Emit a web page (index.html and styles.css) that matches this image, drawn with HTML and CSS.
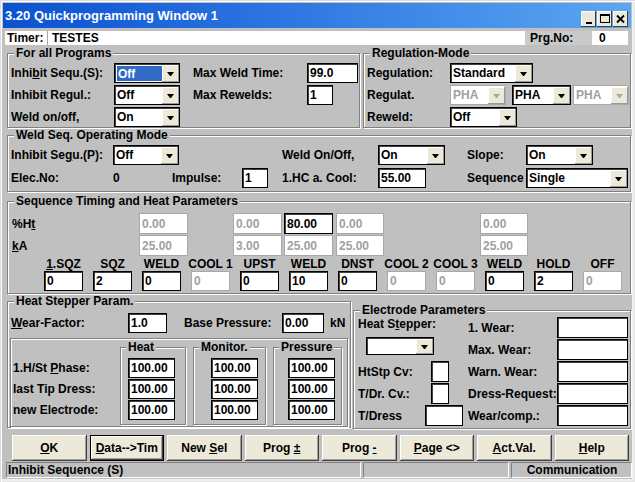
FILE: index.html
```html
<!DOCTYPE html>
<html>
<head>
<meta charset="utf-8">
<title>3.20 Quickprogramming Window 1</title>
<link rel="stylesheet" href="styles.css">
</head>
<body>
<div class="window">
  <div class="titlebar">
    <span class="title">3.20 Quickprogramming Window 1</span>
    <div class="wbtns">
      <span class="wb"><svg width="15" height="16" viewBox="0 0 15 16"><rect x="5" y="11" width="6" height="2" fill="#000"/></svg></span>
      <span class="wb"><svg width="15" height="16" viewBox="0 0 15 16"><rect x="3.5" y="3.5" width="9" height="8" fill="none" stroke="#000"/><rect x="3" y="3" width="10" height="2" fill="#000"/></svg></span>
      <span class="wb"><svg width="15" height="16" viewBox="0 0 15 16"><path d="M4 4.5l7 7M11 4.5l-7 7" stroke="#000" stroke-width="1.8"/></svg></span>
    </div>
  </div>

  <div class="timerbar">
    <div class="timer"><span class="tl">Timer:</span><span class="tv">TESTES</span></div>
    <div class="prg">Prg.No:</div>
    <div class="prgv">0</div>
  </div>

  <div class="row1">
    <div class="group g-all">
      <span class="cap">For all Programs</span>
      <div class="grid-all">
        <span class="lb"><span>Inhi<u>b</u>it Sequ.(S):</span></span>
        <div class="cmb w66"><span class="cv"><span class="hl">Off</span></span><i class="dd"></i></div>
        <span></span>
        <span class="lb">Max Weld Time:</span>
        <div class="in w51">99.0</div>
        <span class="lb">Inhibit Regul.:</span>
        <div class="cmb w66"><span class="cv">Off</span><i class="dd"></i></div>
        <span></span>
        <span class="lb">Max Rewelds:</span>
        <div class="in w26">1</div>
        <span class="lb">Weld on/off,</span>
        <div class="cmb w66"><span class="cv">On</span><i class="dd"></i></div>
      </div>
    </div>
    <div class="group g-reg">
      <span class="cap">Regulation-Mode</span>
      <div class="grid-reg">
        <span class="lb">Regulation:</span>
        <div class="cmb w83"><span class="cv">Standard</span><i class="dd"></i></div>
        <span class="lb">Regulat.</span>
        <div class="trio">
          <div class="cmb dis w56"><span class="cv">PHA</span><i class="dd"></i></div>
          <div class="cmb w59 ml6"><span class="cv">PHA</span><i class="dd"></i></div>
          <div class="cmb dis w56 ml2"><span class="cv">PHA</span><i class="dd"></i></div>
        </div>
        <span class="lb">Reweld:</span>
        <div class="cmb w67"><span class="cv">Off</span><i class="dd"></i></div>
      </div>
    </div>
  </div>

  <div class="group g-weld">
    <span class="cap">Weld Seq. Operating Mode</span>
    <div class="grid-weld">
      <span class="lb r1 c1"><span>Inhibit Se<u>g</u>u.(P):</span></span>
      <div class="cmb w66 r1 c2"><span class="cv">Off</span><i class="dd"></i></div>
      <span class="lb r1 c5">Weld On/Off,</span>
      <div class="cmb w67 r1 c6"><span class="cv">On</span><i class="dd"></i></div>
      <span class="lb r1 c8">Slope:</span>
      <div class="cmb w67 r1 c9"><span class="cv">On</span><i class="dd"></i></div>

      <span class="lb r2 c1">Elec.No:</span>
      <span class="lb r2 c2">0</span>
      <span class="lb r2 c3">Impulse:</span>
      <div class="in w26 r2 c4">1</div>
      <span class="lb r2 c5">1.HC a. Cool:</span>
      <div class="in w48 r2 c6">55.00</div>
      <span class="lb r2 c8">Sequence</span>
      <div class="cmb w102 r2 c9"><span class="cv">Single</span><i class="dd"></i></div>
    </div>
  </div>

  <div class="group g-seq">
    <span class="cap">Sequence Timing and Heat Parameters</span>
    <div class="ht-grid">
      <span class="lb r1 c1"><span>%H<u>t</u></span></span>
      <div class="in dis r1 c2">0.00</div>
      <div class="in dis r1 c4">0.00</div>
      <div class="in r1 c6">80.00</div>
      <div class="in dis r1 c8">0.00</div>
      <div class="in dis r1 c10">0.00</div>
      <span class="lb r2 c1"><span><u>k</u>A</span></span>
      <div class="in dis r2 c2">25.00</div>
      <div class="in dis r2 c4">3.00</div>
      <div class="in dis r2 c6">25.00</div>
      <div class="in dis r2 c8">25.00</div>
      <div class="in dis r2 c10">25.00</div>
    </div>
    <div class="ph-grid">
      <span class="ph"><span><u>1</u>.SQZ</span></span>
      <span class="ph">SQZ</span>
      <span class="ph">WELD</span>
      <span class="ph">COOL 1</span>
      <span class="ph">UPST</span>
      <span class="ph">WELD</span>
      <span class="ph">DNST</span>
      <span class="ph">COOL 2</span>
      <span class="ph">COOL 3</span>
      <span class="ph">WELD</span>
      <span class="ph">HOLD</span>
      <span class="ph">OFF</span>
      <div class="in">0</div>
      <div class="in">2</div>
      <div class="in">0</div>
      <div class="in dis">0</div>
      <div class="in">0</div>
      <div class="in">10</div>
      <div class="in">0</div>
      <div class="in dis">0</div>
      <div class="in dis">0</div>
      <div class="in">0</div>
      <div class="in">2</div>
      <div class="in dis">0</div>
    </div>
  </div>

  <div class="row3">
    <div class="group g-heat">
      <span class="cap">Heat Stepper Param.</span>
      <div class="wf-row">
        <span class="lb wfl"><span><u>W</u>ear-Factor:</span></span>
        <div class="in w39">1.0</div>
        <span class="lb bpl">Base Pressure:</span>
        <div class="in w42">0.00</div>
        <span class="lb kn">kN</span>
      </div>
      <div class="panel">
        <div class="plabels">
          <span class="lb"><span>1.H/St <u>P</u>hase:</span></span>
          <span class="lb">last Tip Dress:</span>
          <span class="lb">new Electrode:</span>
        </div>
        <div class="group sg sg-heat">
          <span class="cap">Heat</span>
          <div class="sgcol">
            <div class="in w47">100.00</div>
            <div class="in w47">100.00</div>
            <div class="in w47">100.00</div>
          </div>
        </div>
        <div class="group sg sg-mon">
          <span class="cap">Monitor.</span>
          <div class="sgcol">
            <div class="in w47">100.00</div>
            <div class="in w47">100.00</div>
            <div class="in w47">100.00</div>
          </div>
        </div>
        <div class="group sg sg-pre">
          <span class="cap">Pressure</span>
          <div class="sgcol">
            <div class="in w47">100.00</div>
            <div class="in w47">100.00</div>
            <div class="in w47">100.00</div>
          </div>
        </div>
      </div>
    </div>

    <div class="group g-elec">
      <span class="cap">Electrode Parameters</span>
      <div class="ecol-l">
        <span class="lb hsl"><span>Heat S<u>t</u>epper:</span></span>
        <div class="cmb w68 h18 hsc"><span class="cv"></span><i class="dd"></i></div>
        <div class="erow first"><span class="lb">HtStp Cv:</span><div class="in w18 h21"></div></div>
        <div class="erow"><span class="lb">T/Dr. Cv.:</span><div class="in w18 h21"></div></div>
        <div class="erow td"><span class="lb">T/Dress</span><div class="in w38 h21"></div></div>
      </div>
      <div class="ecol-r">
        <span class="lb">1. Wear:</span><div class="in h21"></div>
        <span class="lb">Max. Wear:</span><div class="in h21"></div>
        <span class="lb">Warn. Wear:</span><div class="in h21"></div>
        <span class="lb">Dress-Request:</span><div class="in h21"></div>
        <span class="lb">Wear/comp.:</span><div class="in h21"></div>
      </div>
    </div>
  </div>

  <div class="buttons">
    <div class="btn"><span><u>O</u>K</span></div>
    <div class="btn def"><span><u>D</u>ata--&gt;Tim</span></div>
    <div class="btn"><span>New <u>S</u>el</span></div>
    <div class="btn"><span>Prog <u>±</u></span></div>
    <div class="btn"><span>Prog <u>-</u></span></div>
    <div class="btn"><span><u>P</u>age &lt;&gt;</span></div>
    <div class="btn"><span><u>A</u>ct.Val.</span></div>
    <div class="btn"><span><u>H</u>elp</span></div>
  </div>

  <div class="status">
    <div class="sp">Inhibit Sequence (S)</div>
    <div class="sp"></div>
    <div class="sp c">Communication</div>
  </div>
</div>
</body>
</html>
```

FILE: styles.css
```css
* { box-sizing: border-box; }
html, body { margin: 0; padding: 0; }
body {
  background: #e4e4e4;
  font: bold 12px "Liberation Sans", Arial, sans-serif;
  color: #000;
}
u { text-decoration: underline; text-underline-offset: 1px; }

.window {
  width: 635px;
  height: 482px;
  padding: 3px 4px 0 3px;
  background: #c0c0c0;
  box-shadow: inset 1px 1px #dcdcdc, inset 2px 2px #fff, inset -1px -1px #e6e6e6, inset -3px -3px #f0f0f0;
  overflow: hidden;
}

/* title bar */
.titlebar {
  height: 25px;
  display: flex;
  align-items: flex-start;
  background: linear-gradient(to right, #0a52d0 0%, #2a72e0 40%, #5ca6f2 100%);
}
.title {
  color: #fff;
  font-size: 13px;
  line-height: 26px;
  padding-left: 2px;
}
.wbtns {
  margin: 8px 3px 0 auto;
  display: flex;
  gap: 1px;
}
.wb {
  width: 15px;
  height: 16px;
  background: #ece9d8;
  box-shadow: inset -1px -1px #404040, inset 1px 1px #fff;
  display: block;
}
.wb svg { display: block; }

/* timer row */
.timerbar {
  margin-top: 3px;
  height: 14px;
  display: flex;
  line-height: 14px;
}
.timer {
  margin-left: 2px;
  width: 520px;
  background: #fff;
  display: flex;
}
.tl {
  width: 43px;
  padding-left: 2px;
  border-right: 1px solid #a8a8a8;
}
.tv { padding-left: 4px; }
.prg {
  width: 67px;
  padding-left: 5px;
  background: #cacaca;
}
.prgv {
  width: 36px;
  padding-left: 7px;
  background: #fff;
}

/* group boxes */
.group {
  position: relative;
  border: 1px solid #808080;
  box-shadow: inset 1px 1px #fff, 1px 1px #fff;
}
.cap {
  position: absolute;
  top: -7px;
  left: 6px;
  padding: 0 2px;
  background: #c0c0c0;
  line-height: 13px;
  white-space: nowrap;
}
.sg .cap { left: 5px; }

.lb {
  display: flex;
  align-items: center;
  white-space: nowrap;
}

/* combo */
.cmb {
  display: flex;
  height: 20px;
  background: #fff;
  border: 1px solid #000;
  box-shadow: inset 1px 1px #404040;
}
.cv {
  flex: 1;
  display: flex;
  align-items: center;
  padding-left: 2px;
  overflow: hidden;
  white-space: nowrap;
}
.hl {
  align-self: stretch;
  flex: 1;
  margin: 2px 0 1px;
  display: flex;
  align-items: center;
  padding-left: 1px;
  background: #316ac5;
  color: #fff;
}
.dd {
  width: 17px;
  margin: 1px 0 0 0;
  background: #ece9d8;
  box-shadow: inset -1px -1px #9a9a9a, inset 1px 1px #fff;
  display: flex;
  align-items: center;
  justify-content: center;
}
.dd::after {
  content: "";
  width: 1px;
  height: 0;
  border-left: 3px solid transparent;
  border-right: 3px solid transparent;
  border-top: 4px solid #000;
}
.cmb.dis {
  border-color: #a8a8a8;
  box-shadow: none;
  color: #a0a0a0;
}
.cmb.dis .dd::after { border-top-color: #a8a8a8; }

/* edit */
.in {
  height: 20px;
  background: #fff;
  border: 1px solid #000;
  box-shadow: inset 1px 1px #404040;
  padding-left: 2px;
  display: flex;
  align-items: center;
  white-space: nowrap;
}
.in.dis {
  border-color: #a8a8a8;
  box-shadow: none;
  color: #a0a0a0;
}

.w18 { width: 18px; }
.w26 { width: 26px; }
.w38 { width: 38px; }
.w39 { width: 39px; }
.w42 { width: 42px; }
.w47 { width: 47px; }
.w48 { width: 48px; }
.w51 { width: 51px; }
.w56 { width: 56px; }
.w59 { width: 59px; }
.w66 { width: 66px; }
.w67 { width: 67px; }
.w68 { width: 68px; }
.w83 { width: 83px; }
.w102 { width: 102px; }
.h18 { height: 18px; }
.h21 { height: 21px; }
.ml2 { margin-left: 2px; }
.ml6 { margin-left: 6px; }

.r1 { grid-row: 1; }
.r2 { grid-row: 2; }
.c1 { grid-column: 1; }
.c2 { grid-column: 2; }
.c3 { grid-column: 3; }
.c4 { grid-column: 4; }
.c5 { grid-column: 5; }
.c6 { grid-column: 6; }
.c8 { grid-column: 8; }
.c9 { grid-column: 9; }
.c10 { grid-column: 10; }

/* row 1 */
.row1 {
  display: flex;
  margin-top: 8px;
  height: 75px;
}
.g-all {
  width: 353px;
  height: 75px;
  margin-left: 4px;
  padding: 9px 0 0 3px;
}
.grid-all {
  display: grid;
  grid-template-columns: 103px 66px 13px 114px 1fr;
  grid-auto-rows: 20px;
  row-gap: 2px;
}
.g-reg {
  width: 268px;
  height: 75px;
  margin-left: 3px;
  padding: 9px 0 0 3px;
}
.grid-reg {
  display: grid;
  grid-template-columns: 83px 1fr;
  grid-auto-rows: 20px;
  row-gap: 2px;
  justify-items: start;
}
.trio { display: flex; }

/* weld seq */
.g-weld {
  width: 624px;
  height: 57px;
  margin: 7px 0 0 4px;
  padding: 9px 0 0 3px;
}
.grid-weld {
  display: grid;
  grid-template-columns: 102px 59px 70px 40px 96px 67px 22px 59px 101px;
  grid-template-rows: 20px 20px;
  row-gap: 3px;
  justify-items: start;
}

/* sequence timing */
.g-seq {
  width: 624px;
  height: 93px;
  margin: 9px 0 0 4px;
  padding: 11px 0 0 4px;
}
.ht-grid {
  display: grid;
  grid-template-columns: 127px 49px 45px 49px 2px 49px 3px 48px 96px 48px;
  grid-template-rows: 21px 21px;
  row-gap: 1px;
}
.ht-grid .in { height: 21px; }
.ph-grid {
  margin-left: 32px;
  display: grid;
  grid-template-columns: repeat(12, 39px);
  grid-template-rows: 15px 20px;
  column-gap: 10px;
}
.ph {
  display: flex;
  justify-content: center;
  align-items: center;
  white-space: nowrap;
}

/* row 3 */
.row3 {
  display: flex;
  align-items: flex-start;
  margin-top: 7px;
  height: 128px;
}
.g-heat {
  width: 344px;
  height: 127px;
  margin-left: 4px;
  padding-top: 11px;
}
.wf-row {
  display: flex;
  height: 20px;
  padding-left: 3px;
}
.wfl { width: 117px; }
.bpl { width: 98px; margin-left: 17px; }
.kn { margin-left: 6px; }
.panel {
  margin: 5px 2px 0;
  height: 89px;
  border: 1px solid #808080;
  box-shadow: inset 1px 1px #fff, 1px 1px #fff;
  display: flex;
  align-items: flex-start;
}
.plabels {
  width: 109px;
  padding-left: 2px;
  margin-top: 19px;
  display: grid;
  grid-auto-rows: 20px;
  row-gap: 1px;
}
.sg {
  margin-top: 8px;
  height: 78px;
}
.sg-heat { width: 66px; }
.sg-mon { width: 73px; margin-left: 7px; }
.sg-pre { width: 69px; margin-left: 7px; }
.sgcol {
  padding-top: 10px;
  display: grid;
  grid-auto-rows: 20px;
  row-gap: 1px;
}
.sg-heat .in { margin-left: 7px; }
.sg-mon .in { margin-left: 17px; }
.sg-pre .in { margin-left: 14px; }

.g-elec {
  width: 278px;
  height: 119px;
  margin: 9px 0 0 2px;
  padding: 6px 0 0 4px;
  display: flex;
  align-items: flex-start;
}
.ecol-l {
  width: 110px;
  display: flex;
  flex-direction: column;
}
.hsl { height: 14px; }
.hsc { margin: 6px 0 0 8px; }
.erow {
  display: grid;
  grid-template-columns: 73px 18px;
  height: 21px;
  margin-top: 1px;
}
.erow.first { margin-top: 6px; }
.erow.td { grid-template-columns: 67px 38px; }
.ecol-r {
  display: grid;
  grid-template-columns: 89px 71px;
  grid-auto-rows: 21px;
  row-gap: 1px;
}

/* buttons */
.buttons {
  display: grid;
  grid-template-columns: repeat(8, 1fr);
  column-gap: 3px;
  height: 26px;
  margin: 6px 2px 0 9px;
}
.btn {
  background: #ece9d8;
  box-shadow: inset -1px -1px #404040, inset 1px 1px #fff, inset -2px -2px #a0a0a0;
  display: flex;
  align-items: center;
  justify-content: center;
  white-space: nowrap;
}
.btn.def { border: 1px solid #000; }

/* status bar */
.status {
  display: grid;
  grid-template-columns: 355px 146px 121px;
  column-gap: 2px;
  height: 16px;
  margin: 1px 0 0 3px;
}
.sp {
  border: 1px solid;
  border-color: #808080 #fff #fff #808080;
  display: flex;
  align-items: center;
  padding-left: 1px;
  white-space: nowrap;
}
.sp.c { justify-content: center; }
```
